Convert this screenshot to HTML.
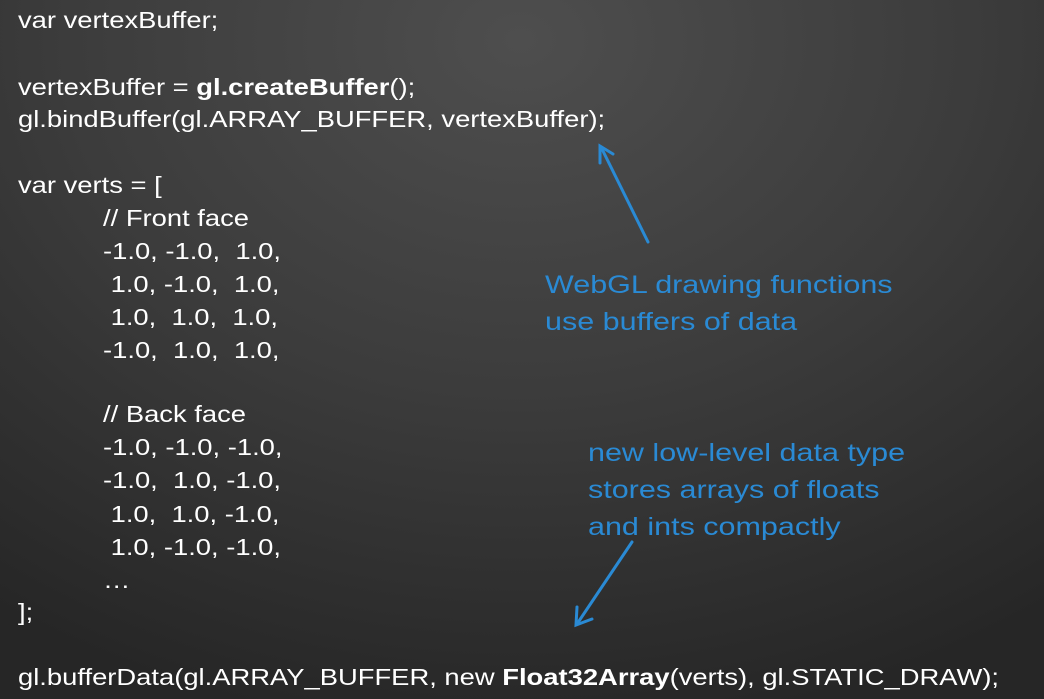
<!DOCTYPE html>
<html><head><style>
body{margin:0;width:1044px;height:699px;overflow:hidden;background:radial-gradient(ellipse 900px 700px at 520px 40px,#4e4e4e 0%,#3c3c3c 50%,#262626 100%);font-family:"Liberation Sans",Arial,sans-serif;position:relative}
.c{position:absolute;left:18px;color:#fff;font-size:23px;white-space:pre;line-height:30px;transform:scaleX(1.19);transform-origin:0 0}
.i{left:103px}
.b{position:absolute;color:#2a8ad4;font-size:25px;line-height:30px;white-space:pre;transform:scaleX(1.22);transform-origin:0 0}
</style></head><body>
<div class="c" style="top:5px">var vertexBuffer;</div>
<div class="c" style="top:72px">vertexBuffer = <b>gl.createBuffer</b>();</div>
<div class="c" style="top:104px">gl.bindBuffer(gl.ARRAY_BUFFER, vertexBuffer);</div>
<div class="c" style="top:170px">var verts = [</div>
<div class="c i" style="top:203px">// Front face</div>
<div class="c i" style="top:236px">-1.0, -1.0,  1.0,</div>
<div class="c i" style="top:269px"> 1.0, -1.0,  1.0,</div>
<div class="c i" style="top:302px"> 1.0,  1.0,  1.0,</div>
<div class="c i" style="top:335px">-1.0,  1.0,  1.0,</div>
<div class="c i" style="top:399px">// Back face</div>
<div class="c i" style="top:432px">-1.0, -1.0, -1.0,</div>
<div class="c i" style="top:465px">-1.0,  1.0, -1.0,</div>
<div class="c i" style="top:499px"> 1.0,  1.0, -1.0,</div>
<div class="c i" style="top:532px"> 1.0, -1.0, -1.0,</div>
<div class="c i" style="top:565px">…</div>
<div class="c" style="top:597px">];</div>
<div class="c" style="top:662px">gl.bufferData(gl.ARRAY_BUFFER, new <b>Float32Array</b>(verts), gl.STATIC_DRAW);</div>
<div class="b" style="left:545px;top:270px">WebGL drawing functions</div>
<div class="b" style="left:545px;top:307px">use buffers of data</div>
<div class="b" style="left:588px;top:438px">new low-level data type</div>
<div class="b" style="left:588px;top:475px">stores arrays of floats</div>
<div class="b" style="left:588px;top:512px">and ints compactly</div>
<svg width="1044" height="699" style="position:absolute;left:0;top:0">
<g stroke="#2a8ad4" stroke-width="3" fill="none" stroke-linecap="round">
<line x1="648" y1="242" x2="601" y2="147"/>
<polyline points="600,163 600,146 613,154"/>
<line x1="632" y1="542" x2="577" y2="624"/>
<polyline points="577,607 576,625 592,619"/>
</g></svg>
</body></html>
